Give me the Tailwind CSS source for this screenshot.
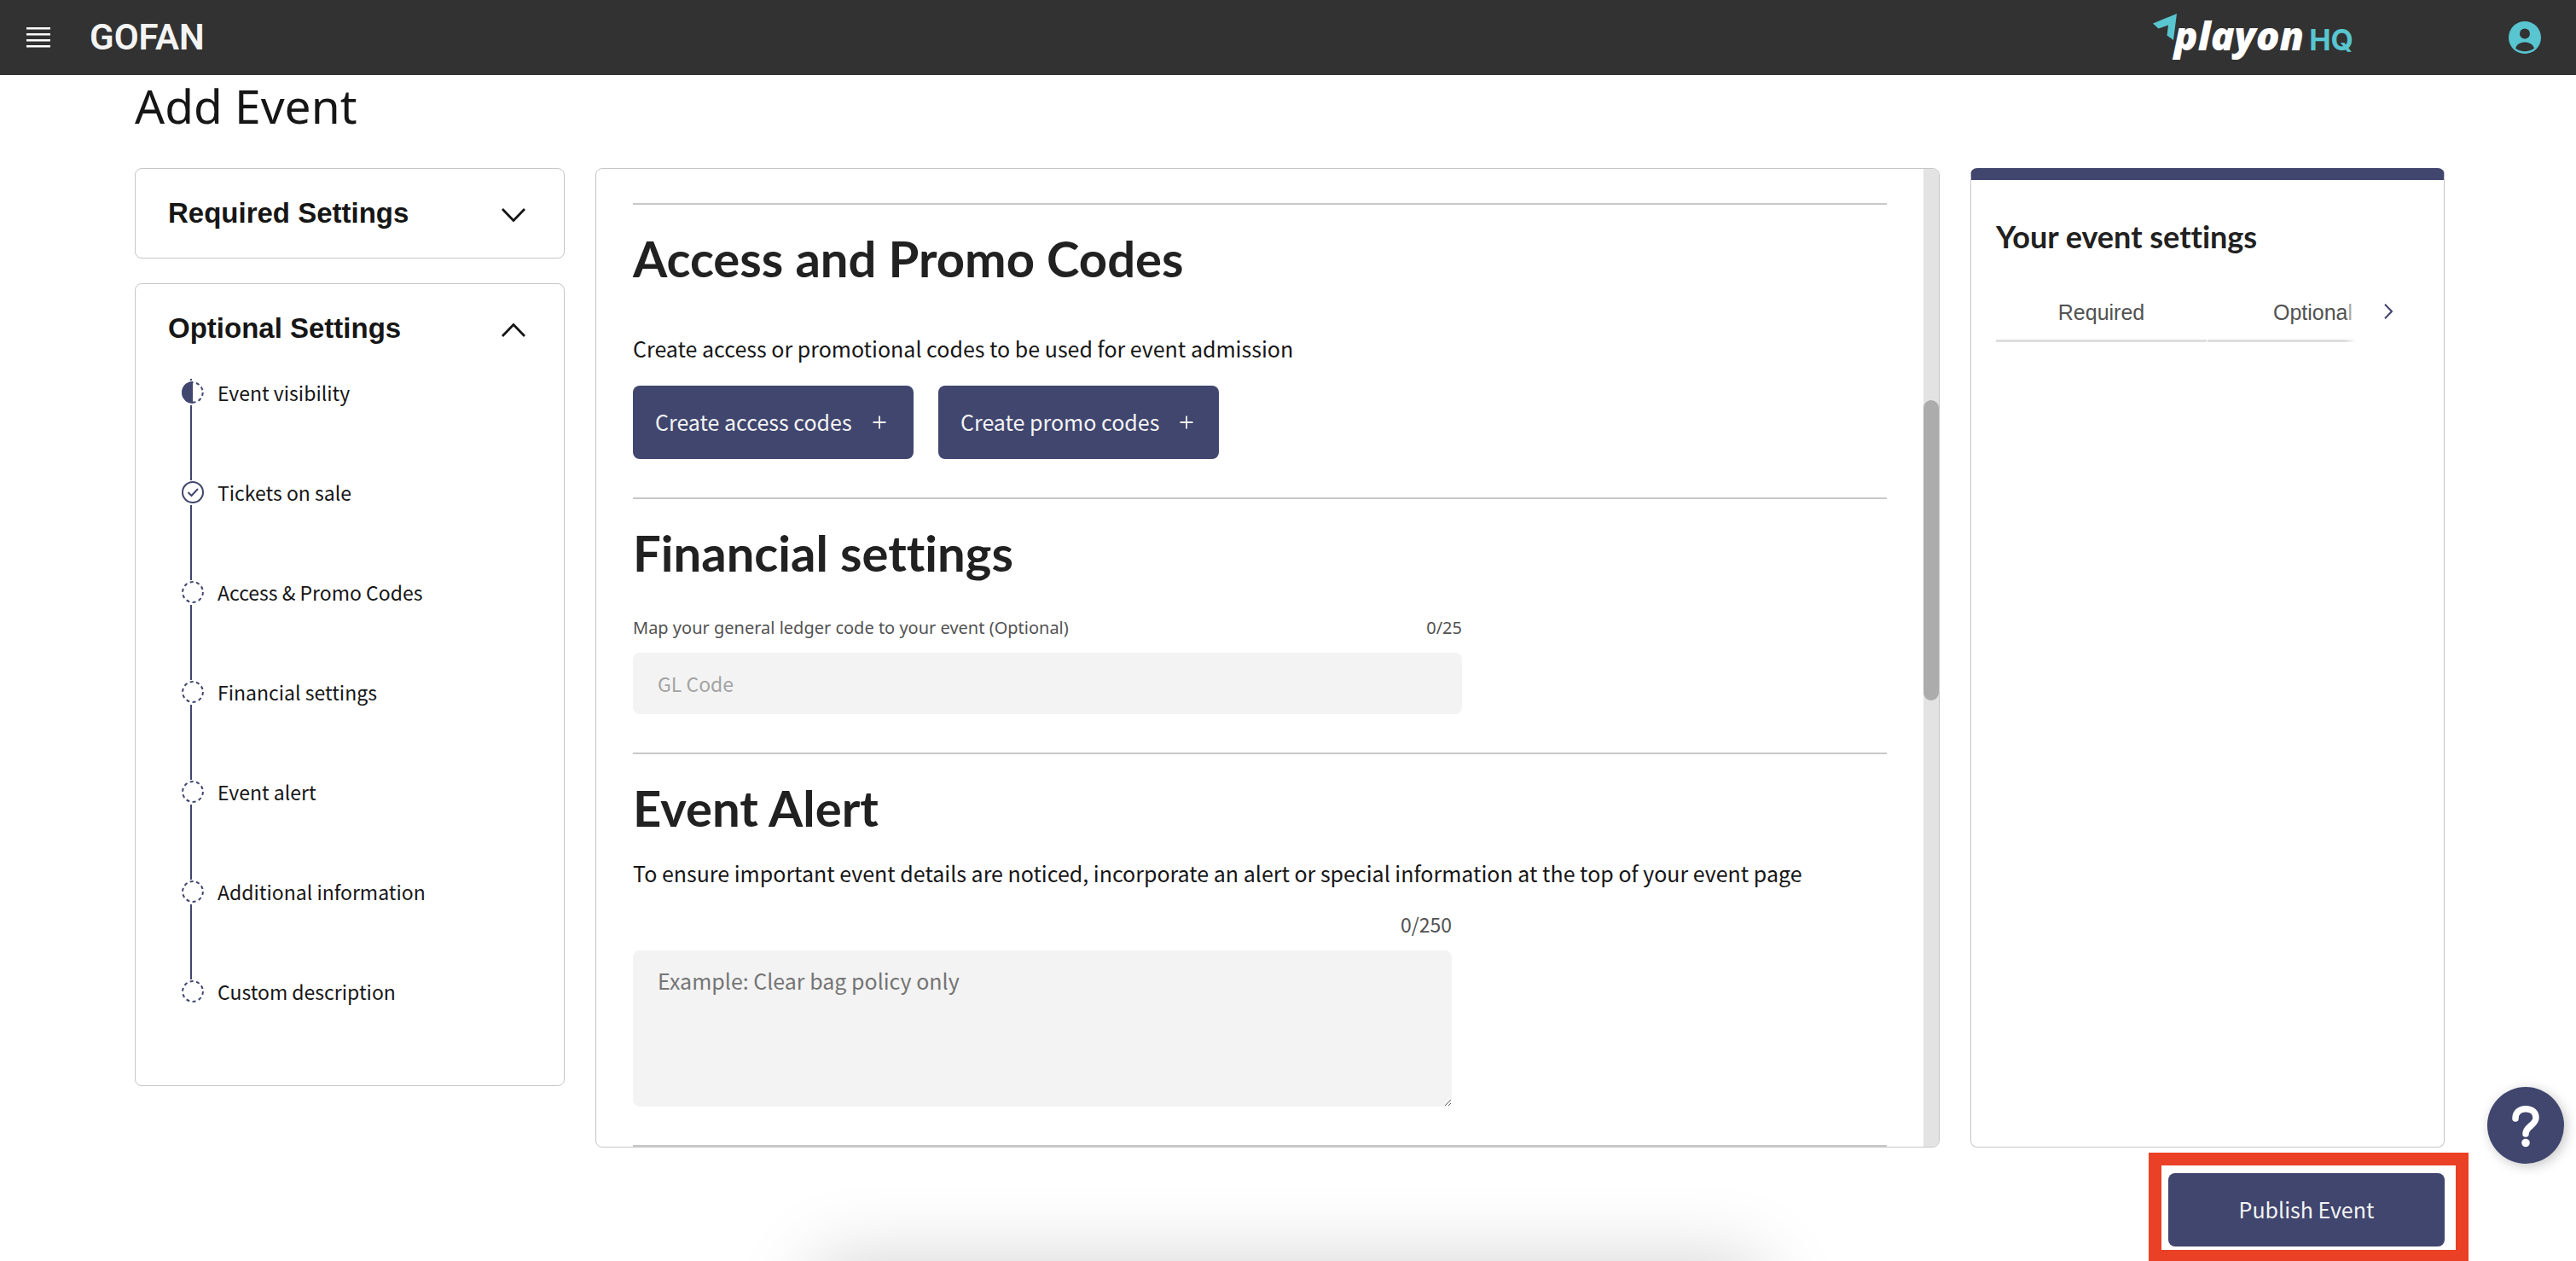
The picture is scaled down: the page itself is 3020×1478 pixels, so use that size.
<!DOCTYPE html>
<html lang="en">
<head>
<meta charset="utf-8">
<meta name="viewport" content="width=device-width, initial-scale=1">
<title>GoFan – Add Event</title>
<script src="https://cdn.jsdelivr.net/npm/@tailwindcss/browser@4"></script>
</head>
<body class="bg-white">
<div class="relative flex min-h-screen flex-col overflow-hidden font-['Noto_Sans_CJK_SC',sans-serif] text-[25px] text-[#161616] [font-variant-ligatures:none]">

  <header class="flex h-[88px] items-center bg-[#323232] pr-[41px] pl-[31px]">
    <button type="button" aria-label="Open menu">
      <svg class="block h-6 w-7" viewBox="0 0 28 24" fill="#fff"><path d="M0 0h28v2.5H0zM0 7h28v2.5H0zM0 14h28v2.5H0zM0 21h28v2.5H0z"/></svg>
    </button>
    <a href="#" class="ml-[46px] font-['Roboto',sans-serif] text-[42px] leading-[48px] font-semibold text-[#f4f4f4]">GOFAN</a>
    <a href="#" class="relative ml-auto flex items-baseline pb-1.5 pl-[25px] whitespace-nowrap" aria-label="playon HQ">
      <svg class="absolute top-[5px] left-0 h-8 w-7" viewBox="0 0 28 32" fill="#58c5d0"><path d="M28 0 24 31 16.500 25.500 18 13.500 6.500 17.500 0 11.500Z"/></svg>
      <span class="font-['Open_Sans',sans-serif] text-[46px] leading-[60px] font-extrabold text-white italic">playon</span>
      <span class="ml-1.5 font-['Inter',sans-serif] text-[34px] leading-[40px] font-bold text-[#58c5d0]">HQ</span>
    </a>
    <button type="button" aria-label="Account" class="ml-[182px]">
      <svg class="block size-[38px]" viewBox="0 0 38 38"><circle cx="19" cy="19" r="19" fill="#58c5d0"/><circle cx="19" cy="14.500" r="6" fill="#323232"/><path d="M8 31.500c1.500-4.500 6-7 11-7s9.500 2.500 11 7c-3 2.500-7 3.700-11 3.700s-8-1.200-11-3.700Z" fill="#323232"/></svg>
    </button>
  </header>

  <main class="flex flex-1 flex-col pr-[154px] pl-[158px]">
    <h1 class="pb-[37px] font-['Noto_Sans',sans-serif] text-[55px] leading-[72px]">Add Event</h1>

    <div class="grid flex-1 grid-cols-[504fr_1576fr_556fr] gap-9">
      <nav class="flex flex-col gap-[29px]" aria-label="Event settings">
        <section class="rounded-lg border border-[#c6c6c6]">
          <button type="button" aria-expanded="false" class="flex h-[104px] w-full items-center justify-between pr-[45px] pl-[38px] font-['Liberation_Sans',Arial,sans-serif] text-[33px] leading-10 font-bold">
            Required Settings
            <svg class="mt-1 h-4 w-7" viewBox="0 0 28 16" fill="none" stroke="#161616" stroke-width="2.800"><path d="M1 1l13 13.500L27 1"/></svg>
          </button>
        </section>

        <section class="h-[941px] rounded-lg border border-[#c6c6c6]">
          <button type="button" aria-expanded="true" class="flex h-[104px] w-full items-center justify-between pr-[45px] pl-[38px] font-['Liberation_Sans',Arial,sans-serif] text-[33px] leading-10 font-bold">
            Optional Settings
            <svg class="mt-1 h-4 w-7" viewBox="0 0 28 16" fill="none" stroke="#161616" stroke-width="2.800"><path d="M1 15L14 1.500 27 15"/></svg>
          </button>
          <ul id="steps" class="mt-[7px] pl-[54px] text-[23px] leading-[29px]">
            <li class="ml-2.5 h-0.5 w-0.5 bg-[#40466e]"></li>
          </ul>
        </section>
      </nav>

      <div class="flex overflow-hidden rounded-lg border border-[#c6c6c6]">
        <div class="flex-1 pt-10 pr-[43px] pl-[43px]">
          <section class="border-t-2 border-[#c8c8c8] pt-7 pb-[45px]">
            <h2 class="font-['Lato',sans-serif] text-[58px] leading-[70px] font-bold text-[#212121]">Access and Promo Codes</h2>
            <p class="mt-[52px] leading-9">Create access or promotional codes to be used for event admission</p>
            <div class="mt-[26px] flex gap-[29px]">
              <button type="button" class="flex h-[86px] w-[329px] items-center gap-6 rounded-lg bg-[#40466e] pl-[26px] text-[#f4f4f4]">Create access codes
                <svg class="size-4" viewBox="0 0 16 16" stroke="#f4f4f4" stroke-width="1.800"><path d="M8 .5v15M.5 8h15"/></svg>
              </button>
              <button type="button" class="flex h-[86px] w-[329px] items-center gap-6 rounded-lg bg-[#40466e] pl-[26px] text-[#f4f4f4]">Create promo codes
                <svg class="size-4" viewBox="0 0 16 16" stroke="#f4f4f4" stroke-width="1.800"><path d="M8 .5v15M.5 8h15"/></svg>
              </button>
            </div>
          </section>

          <section class="border-t-2 border-[#c8c8c8] pt-7 pb-[45px]">
            <h2 class="font-['Lato',sans-serif] text-[58px] leading-[70px] font-bold text-[#212121]">Financial settings</h2>
            <div class="mt-[39px] flex w-[972px] justify-between font-['Noto_Sans',sans-serif] text-[20px] leading-7 text-[#525252]">
              <label for="gl">Map your general ledger code to your event (Optional)</label>
              <span>0/25</span>
            </div>
            <input id="gl" type="text" placeholder="GL Code" class="mt-[15px] block h-[72px] w-[972px] rounded-lg bg-[#f3f3f3] px-[29px] text-[23px] placeholder:text-[#a3a3a3]">
          </section>

          <section class="border-t-2 border-[#c8c8c8] pt-7 pb-[45px]">
            <h2 class="font-['Lato',sans-serif] text-[58px] leading-[70px] font-bold text-[#212121]">Event Alert</h2>
            <label for="alert" class="mt-[23px] block leading-9">To ensure important event details are noticed, incorporate an alert or special information at the top of your event page</label>
            <p class="mt-7 w-[960px] text-right text-[23px] leading-7 text-[#525252]">0/250</p>
            <textarea id="alert" placeholder="Example: Clear bag policy only" class="mt-[17px] block h-[183px] w-[960px] resize rounded-lg bg-[#f3f3f3] px-[29px] py-[17px] leading-9 placeholder:text-[#757575]"></textarea>
          </section>
          <div class="border-t-2 border-[#c8c8c8]"></div>
        </div>
        <div class="w-[18px] bg-[#e3e3e3] pt-[271px]">
          <div class="h-[352px] rounded-full bg-[#acacac]"></div>
        </div>
      </div>

      <aside class="rounded-lg border border-t-[14px] border-[#c6c6c6] border-t-[#40466e] pt-11 pl-[29px]">
        <h2 class="font-['Lato',sans-serif] text-[36px] leading-[44px] font-bold text-[#212121]">Your event settings</h2>
        <div class="mt-9 flex items-start font-['Liberation_Sans',Arial,sans-serif] text-[25px] text-[#525252]">
          <div role="tablist" class="relative flex w-[422px] gap-px overflow-hidden">
            <button type="button" role="tab" class="h-[66px] w-[247px] shrink-0 border-b-[3px] border-[#dedede]">Required</button>
            <button type="button" role="tab" class="h-[66px] w-[247px] shrink-0 border-b-[3px] border-[#dedede]">Optional</button>
            <span class="absolute inset-y-0 right-0 w-3 bg-linear-to-r from-white/10 to-white"></span>
          </div>
          <button type="button" aria-label="Next tab" class="flex h-[60px] w-[75px] items-center justify-center">
            <svg class="h-[18px] w-2.5" viewBox="0 0 10 18" fill="none" stroke="#40466e" stroke-width="2"><path d="M1 .7L9 9 1 17.300"/></svg>
          </button>
        </div>
      </aside>
    </div>

    <div class="relative mt-[30px] mb-[17px] self-end">
      <div class="pointer-events-none absolute -top-6 -right-7 -bottom-[17px] -left-[23px] border-[15px] border-b-[13px] border-[#ea4025]"></div>
      <button type="button" class="block h-[86px] w-[324px] rounded-lg bg-[#40466e] text-[#f4f4f4]">Publish Event</button>
    </div>
  </main>

  <button type="button" aria-label="Help" class="absolute right-3.5 bottom-[114px] size-[90px] rounded-full bg-[#40466e] shadow-[3px_3px_14px_rgba(0,0,0,0.22)]">
    <svg class="size-[90px]" viewBox="0 0 90 90" fill="none" stroke="#fff" stroke-linecap="round"><path d="M33 37C33 29.500 38 25.700 45 25.700c7 0 12 4 12 10.300 0 9-12 10-12 19" stroke-width="7.500"/><circle cx="45" cy="65.500" r="4.800" fill="#fff" stroke="none"/></svg>
  </button>

  <div class="pointer-events-none absolute top-full left-1/2 h-40 w-[1110px] -translate-x-1/2 rounded-[20px] shadow-[0_0_90px_rgba(0,0,0,0.180)]"></div>
</div>

<script>
  const circles = {
    half: '<circle cx="13" cy="13" r="11.7" stroke-dasharray="4 3.350"/><path d="M13 0a13 13 0 0 0 0 26z" fill="#40466e" stroke="none"/>',
    done: '<circle cx="13" cy="13" r="12"/><path d="M7.500 13l4 4 7.500-8"/>',
    todo: '<circle cx="13" cy="13" r="11.900" stroke-dasharray="4 3.480"/>'
  };
  const steps = [
    ['Event visibility', 'half'], ['Tickets on sale', 'done'], ['Access & Promo Codes', 'todo'],
    ['Financial settings', 'todo'], ['Event alert', 'todo'], ['Additional information', 'todo'], ['Custom description', 'todo']
  ];
  document.getElementById('steps').insertAdjacentHTML('beforeend', steps.map(([name, state], i) => `
    <li class="flex h-[117px] gap-4">
      <div class="flex w-[26px] flex-col">
        <svg class="my-px size-[26px] shrink-0" viewBox="0 0 26 26" fill="none" stroke="#40466e" stroke-width="2">${circles[state]}</svg>
        ${i < steps.length - 1 ? '<div class="mt-px ml-2.5 w-0.5 flex-1 bg-[#40466e]"></div>' : ''}
      </div>
      <a href="#">${name.replace('&', '&amp;')}</a>
    </li>`).join(''));
</script>
</body>
</html>
